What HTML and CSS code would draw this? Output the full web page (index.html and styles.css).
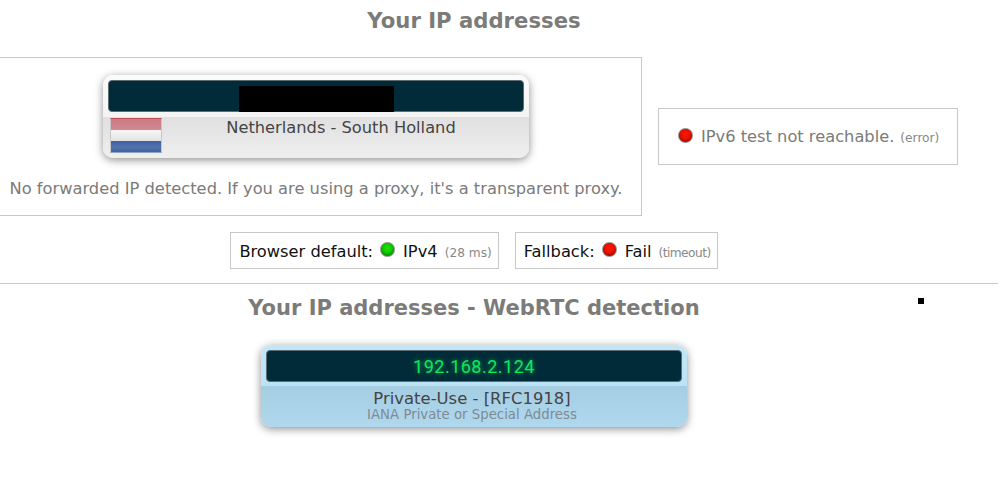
FILE: index.html
```html
<!DOCTYPE html>
<html lang="en">
<head>
<meta charset="utf-8">
<title>Your IP addresses</title>
<link rel="stylesheet" href="styles.css">
</head>
<body>
<div class="page">
  <section class="section">
    <h2 class="title">Your IP addresses</h2>
    <div class="top-row">
      <div class="box main-box">
        <div class="card card-grey">
          <div class="screen"><span class="redact"></span></div>
          <div class="card-body">
            <div class="flag"></div>
            <div class="place">Netherlands - South Holland</div>
          </div>
        </div>
        <p class="note">No forwarded IP detected. If you are using a proxy, it's a transparent proxy.</p>
      </div>
      <div class="box side-box">
        <span class="led led-red"></span>
        <span>IPv6 test not reachable.</span>
        <small class="hint">(error)</small>
      </div>
    </div>
    <div class="pills">
      <div class="box pill"><span>Browser default:</span><span class="led led-green"></span><span class="proto">IPv4</span><small class="hint">(28 ms)</small></div>
      <div class="box pill"><span>Fallback:</span><span class="led led-red"></span><span class="proto">Fail</span><small class="hint hint-tight">(timeout)</small></div>
    </div>
  </section>
  <hr class="rule">
  <section class="section">
    <span class="dot"></span>
    <h2 class="title title-webrtc">Your IP addresses - WebRTC detection</h2>
    <div class="card card-blue">
      <div class="screen"><span class="digits">192.168.2.124</span></div>
      <div class="blue-body">
        <div class="place">Private-Use - [RFC1918]</div>
        <div class="iana">IANA Private or Special Address</div>
      </div>
    </div>
  </section>
</div>
</body>
</html>
```
FILE: styles.css
```css
* { box-sizing: border-box; }
html, body { margin: 0; padding: 0; background: #fff; overflow: hidden; }
body { font-family: "DejaVu Sans", Verdana, sans-serif; font-size: 16.25px; color: #7b7b79; }
.page { width: 998px; height: 480px; }
.section { position: relative; width: 948px; }
.title { margin: 0; font-size: 21.2px; line-height: 26px; font-weight: bold; text-align: center; color: #7b7b79; padding-top: 8px; }
.title-webrtc { font-size: 21px; padding-top: 11px; }
.box { border: 1px solid #c8c8c8; background: #fff; }
.top-row { display: flex; align-items: center; gap: 16px; margin: 23px 0 0 -9px; width: 967px; }
.main-box { width: 651px; height: 159px; padding: 17px 1px 0 0; flex: none; }
.card { width: 426px; margin: 0 auto; border-radius: 10px; box-shadow: 0 2px 9px rgba(0,0,0,.45); overflow: hidden; padding-top: 5px; }
.card-grey { height: 83px; background: linear-gradient(#fbfbfb 0, #f4f4f4 42px, #e0e0e0 42px, #efefef 100%); }
.screen { position: relative; height: 32px; margin: 0 5px; background: #012b39; border: 1px solid #5c6c70; border-radius: 4px; display: flex; align-items: center; justify-content: center; }
.redact { position: absolute; left: 130px; top: 5px; width: 155px; height: 26px; background: #000; }
.card-body { display: flex; position: relative; height: 41px; }
.flag { position: absolute; left: 7px; top: 6px; width: 52px; height: 35px; border: 1px solid #c8c8c8; border-top-color: #c04a58; border-bottom-color: #8fa3c4; background: linear-gradient(#cb7a83 0, #cf8a92 11px, #f6f6f6 11px, #e4e4e4 22px, #3c60a3 22px, #5273ad 28px, #3f62a2 100%); }
.place { width: 100%; text-align: center; font-size: 16.25px; line-height: 19px; color: #444; }
.card-body .place { padding-top: 6px; padding-left: 50px; }
.note { margin: 21px 0 0; text-align: center; font-size: 16.3px; line-height: 19px; color: #7b7b79; }
.side-box { width: 300px; height: 57px; flex: none; display: flex; align-items: center; padding-left: 19px; gap: 8px; }
.side-box .led { margin-top: -2px; }
.side-box .hint { margin-left: -2px; }
.hint { font-size: 12.2px; color: #888; padding-top: 3px; }
.led { width: 15px; height: 15px; border-radius: 50%; flex: none; display: inline-block; border: 1px solid #8a8a8a; }
.led-red { background: radial-gradient(circle at 50% 40%, #ff1800 0, #e81000 45%, #5a0a06 100%); }
.led-green { background: radial-gradient(circle at 50% 40%, #16e800 0, #10c800 45%, #0a5006 100%); }
.pills { display: flex; justify-content: center; gap: 16px; margin-top: 16px; }
.pill { height: 37px; display: flex; align-items: center; padding: 0 6px 0 8px; color: #111; }
.pill > span:not(.led) { position: relative; top: 1px; }
.pill .led { margin: -3px 8px 0 7px; }
.pill .hint { padding-top: 5px; margin-left: 6px; }
.pill .hint-tight { letter-spacing: -0.55px; }
.proto { padding-right: 1px; }
.rule { width: 998px; height: 1px; margin: 14px 0 0; border: 0; background: #c8c8c8; }
.dot { position: absolute; left: 918px; top: 14px; width: 6px; height: 6px; background: #000; }
.card-blue { height: 82px; margin-top: 24px; background: linear-gradient(#c2e6f8 0, #bce2f5 41px, #a5cde2 41px, #afd8ee 100%); }
.digits { font-family: Roboto, sans-serif; font-weight: 400; font-size: 18px; letter-spacing: 0.5px; color: #12e65c; text-shadow: 0 0 5px rgba(20,230,90,.7); }
.blue-body { text-align: center; padding: 7px 4px 0 0; }
.blue-body .place { font-size: 16.45px; line-height: 19px; }
.iana { font-size: 13.3px; line-height: 14px; color: #7f8b92; }
```
